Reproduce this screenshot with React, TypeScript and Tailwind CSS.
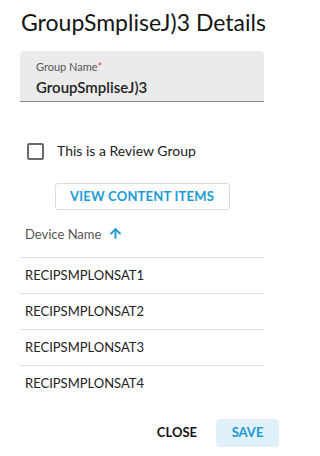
import { ArrowUp } from "lucide-react";

const devices = [
  "RECIPSMPLONSAT1",
  "RECIPSMPLONSAT2",
  "RECIPSMPLONSAT3",
  "RECIPSMPLONSAT4",
];

export default function App() {
  return (
    <div
      className="flex h-[456px] w-[286px] flex-col bg-white pl-5 pr-[22px] text-[#151515]"
      style={{ fontFamily: "Lato, 'Noto Sans', sans-serif" }}
    >
      <h1 className="mt-[7px] h-[30px] whitespace-nowrap pl-px text-[23px] leading-[30px]">
        GroupSmpliseJ)3 Details
      </h1>

      <div className="mt-[14px] flex h-[51px] flex-col rounded-t-[4px] border-b border-[#8a8a8a] bg-[#ebebeb] px-4 pt-[9px]">
        <label className="text-[11px] leading-[14px] text-[#555]">
          Group Name<span className="text-[#e0433b]">*</span>
        </label>
        <span className="mt-[3px] text-[15px] font-semibold leading-5 text-[#222]">
          GroupSmpliseJ)3
        </span>
      </div>

      <label className="mt-[39px] flex items-center gap-[13px] pl-[7px]">
        <span className="h-[17px] w-[17px] rounded-[2px] border-2 border-[#6a6a6a]" />
        <span className="text-[14px] leading-5 text-[#222]">
          This is a Review Group
        </span>
      </label>

      <div className="mt-[22px] flex justify-center">
        <button className="h-[27px] w-[175px] rounded-[3px] border border-[#dcdcdc] text-[13px] font-bold tracking-[0.2px] text-[#1a9ad6]">
          VIEW CONTENT ITEMS
        </button>
      </div>

      <div className="mt-[11px] flex h-[37px] items-start gap-[7px] border-b border-[#dedede] pl-[5px] pt-[3px] text-[13px] leading-5 text-[#555]">
        Device Name
        <ArrowUp className="mt-[2px] h-[15px] w-[15px] text-[#1a9ad6]" strokeWidth={3} />
      </div>

      {devices.map((d, i) => (
        <div
          key={d}
          className={
            i < devices.length - 1
              ? "flex h-9 items-center border-b border-[#dedede] pl-[5px] text-[13px] text-[#222]"
              : "flex h-9 items-center pl-[5px] text-[13px] text-[#222]"
          }
        >
          {d}
        </div>
      ))}

      <div className="mt-[17px] mr-[-15px] flex items-center justify-end gap-[19px]">
        <button className="text-[13px] font-bold text-[#151515]">CLOSE</button>
        <button className="h-7 w-[63px] rounded-[4px] bg-[#e0f1fa] text-[13px] font-bold text-[#1a9ad6]">
          SAVE
        </button>
      </div>
    </div>
  );
}
